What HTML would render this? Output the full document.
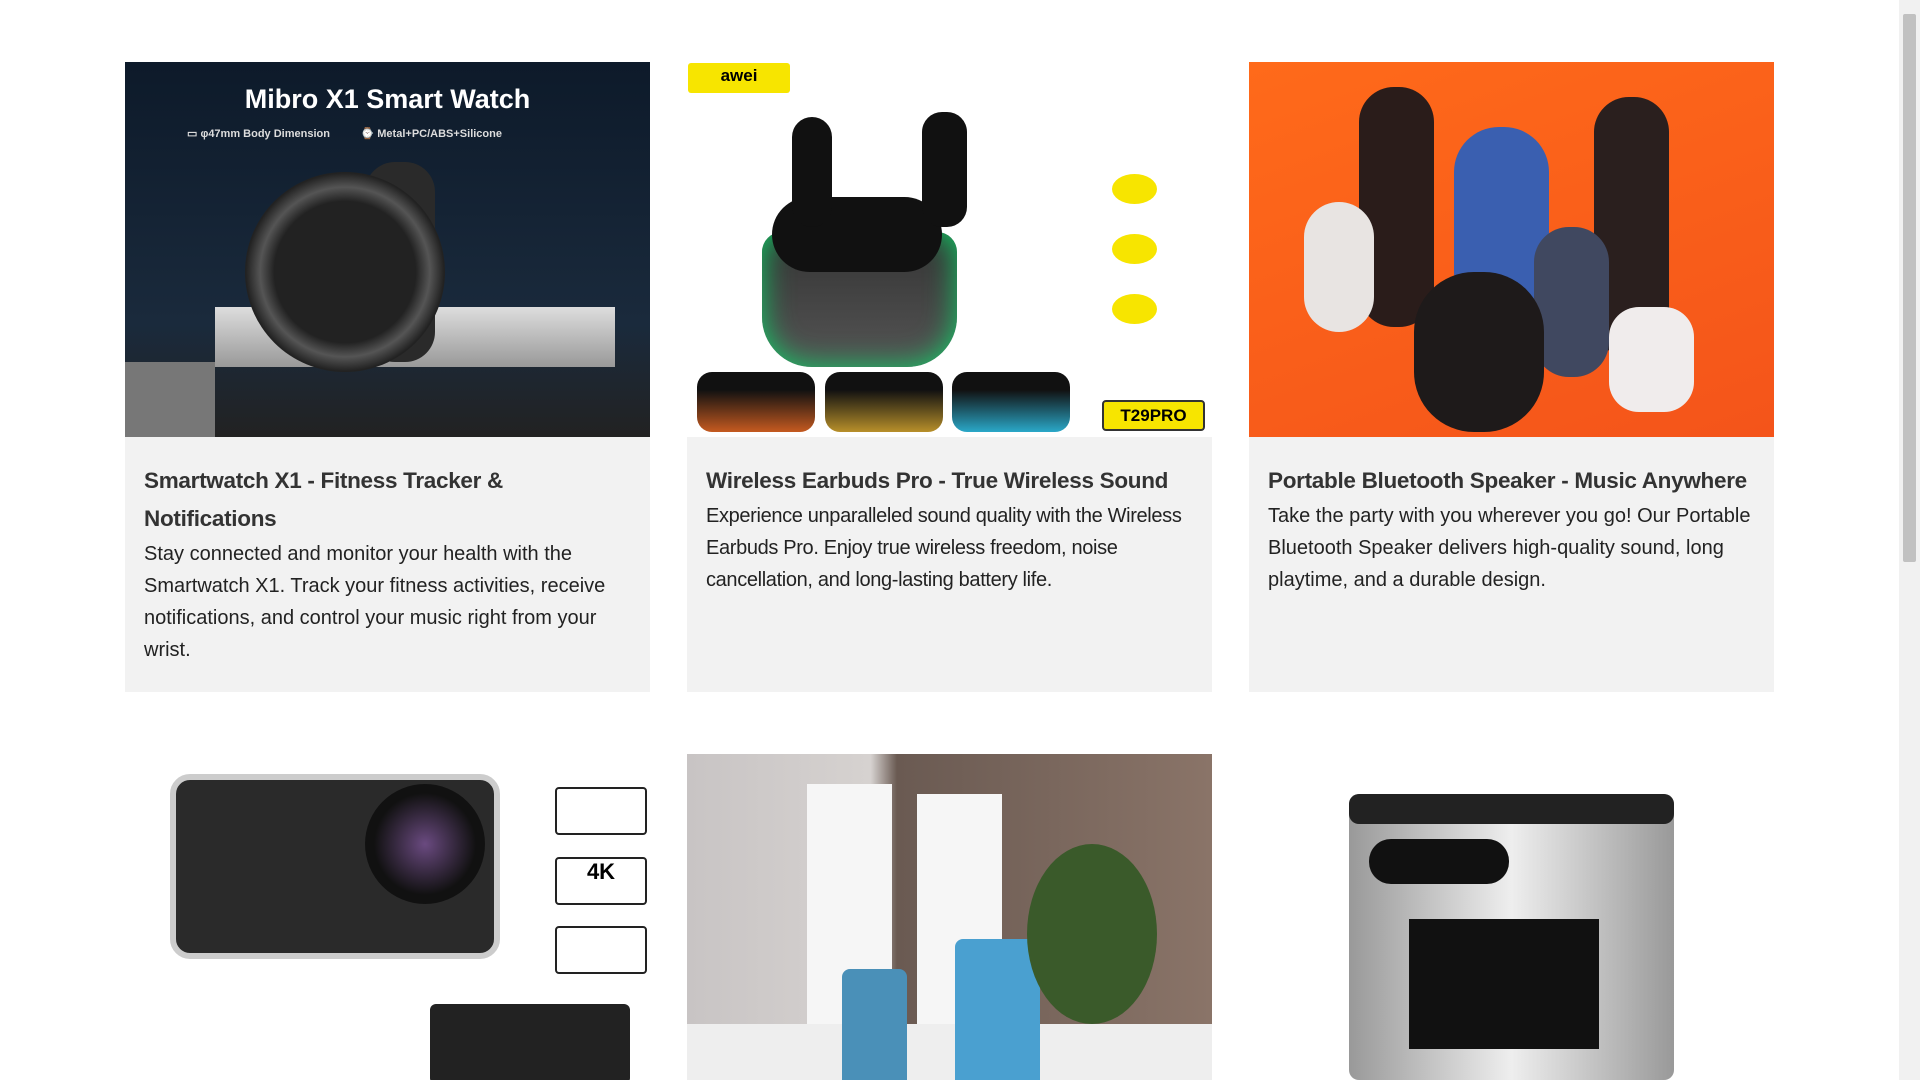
<!DOCTYPE html>
<html><head><meta charset="utf-8"><style>
*{margin:0;padding:0;box-sizing:border-box}
body{width:1920px;height:1080px;overflow:hidden;background:#fff;font-family:"Liberation Sans",sans-serif;position:relative}
.card{position:absolute;width:525px;background:#f2f2f2;top:62px;height:630px}
.img{height:375px;position:relative;overflow:hidden}
.body{padding:25px 19px}
h3{font-size:22.5px;line-height:38px;color:#333;font-weight:bold;letter-spacing:-0.3px}
p{font-size:20px;line-height:32px;color:#222;letter-spacing:0}
.r2{position:absolute;top:754px;width:525px;height:326px;overflow:hidden}
.sb{position:absolute;right:0;top:0;width:21px;height:1080px;background:#f1f1f1}
.th{position:absolute;left:4px;top:14px;width:13px;height:548px;background:#c1c1c1;border-radius:2px}
</style></head><body>

<div class="card" style="left:125px">
 <div class="img" style="background:linear-gradient(180deg,#0d1a2a,#1a2a3c 70%,#222)">
  <div style="position:absolute;top:22px;width:100%;text-align:center;color:#fff;font-size:27px;font-weight:bold">Mibro X1 Smart Watch</div>
  <div style="position:absolute;top:65px;left:62px;color:#ddd;font-size:11px;font-weight:bold">▭ φ47mm Body Dimension &nbsp;&nbsp;&nbsp;&nbsp;&nbsp;&nbsp;&nbsp;&nbsp; ⌚ Metal+PC/ABS+Silicone</div>
  <div style="position:absolute;left:90px;top:245px;width:400px;height:60px;background:linear-gradient(#ddd,#999)"></div>
  <div style="position:absolute;left:0;top:300px;width:90px;height:75px;background:#777"></div>
  <div style="position:absolute;left:240px;top:100px;width:70px;height:200px;border-radius:30px;background:#2a2a2a"></div>
  <div style="position:absolute;left:120px;top:110px;width:200px;height:200px;border-radius:50%;background:radial-gradient(#222 50%,#555 60%,#222 70%);"></div>
 </div>
 <div class="body"><h3>Smartwatch X1 - Fitness Tracker &amp; Notifications</h3><p>Stay connected and monitor your health with the Smartwatch X1. Track your fitness activities, receive notifications, and control your music right from your wrist.</p></div>
</div>

<div class="card" style="left:687px">
 <div class="img" style="background:#fff">
  <div style="position:absolute;left:1px;top:1px;width:102px;height:30px;background:#f7e500;border-radius:3px;font-weight:bold;font-size:17px;text-align:center;line-height:26px">awei</div>
  <div style="position:absolute;left:75px;top:170px;width:195px;height:135px;border-radius:20px 20px 50px 50px;background:linear-gradient(#333,#555);box-shadow:inset 0 0 30px #1c6"></div>
  <div style="position:absolute;left:85px;top:135px;width:170px;height:75px;border-radius:40px;background:#111"></div>
  <div style="position:absolute;left:105px;top:55px;width:40px;height:110px;border-radius:20px;background:#111"></div>
  <div style="position:absolute;left:235px;top:50px;width:45px;height:115px;border-radius:20px;background:#111"></div>
  <div style="position:absolute;left:10px;top:310px;width:118px;height:60px;border-radius:15px;background:linear-gradient(#111 30%,#c55a20)"></div>
  <div style="position:absolute;left:138px;top:310px;width:118px;height:60px;border-radius:15px;background:linear-gradient(#111 30%,#b8902a)"></div>
  <div style="position:absolute;left:265px;top:310px;width:118px;height:60px;border-radius:15px;background:linear-gradient(#111 30%,#2aa8c8)"></div>
  <div style="position:absolute;left:415px;top:338px;width:103px;height:31px;background:#f7e500;border:2px solid #333;border-radius:4px;font-weight:bold;font-size:17px;text-align:center;line-height:27px">T29PRO</div>
  <div style="position:absolute;left:425px;top:112px;width:45px;height:30px;background:#f7e500;border-radius:50%"></div>
  <div style="position:absolute;left:425px;top:172px;width:45px;height:30px;background:#f7e500;border-radius:50%"></div>
  <div style="position:absolute;left:425px;top:232px;width:45px;height:30px;background:#f7e500;border-radius:50%"></div>
 </div>
 <div class="body"><h3>Wireless Earbuds Pro - True Wireless Sound</h3><p style="letter-spacing:-0.35px">Experience unparalleled sound quality with the Wireless Earbuds Pro. Enjoy true wireless freedom, noise cancellation, and long-lasting battery life.</p></div>
</div>

<div class="card" style="left:1249px">
 <div class="img" style="background:linear-gradient(160deg,#ff6a1a,#f4541a)">
  <div style="position:absolute;left:110px;top:25px;width:75px;height:240px;border-radius:35px;background:#2a1c1a"></div>
  <div style="position:absolute;left:345px;top:35px;width:75px;height:260px;border-radius:35px;background:#2a1f1e"></div>
  <div style="position:absolute;left:205px;top:65px;width:95px;height:190px;border-radius:45px;background:#3a5fb0"></div>
  <div style="position:absolute;left:55px;top:140px;width:70px;height:130px;border-radius:35px;background:#e8e4e2"></div>
  <div style="position:absolute;left:285px;top:165px;width:75px;height:150px;border-radius:35px;background:#404860"></div>
  <div style="position:absolute;left:165px;top:210px;width:130px;height:160px;border-radius:60px;background:#1e1a1a"></div>
  <div style="position:absolute;left:360px;top:245px;width:85px;height:105px;border-radius:30px;background:#f0ecec"></div>
 </div>
 <div class="body"><h3>Portable Bluetooth Speaker - Music Anywhere</h3><p>Take the party with you wherever you go! Our Portable Bluetooth Speaker delivers high-quality sound, long playtime, and a durable design.</p></div>
</div>

<div class="r2" style="left:125px;background:#fff">
 <div style="position:absolute;left:45px;top:20px;width:330px;height:185px;border-radius:20px;background:#2a2a2a;border:6px solid #ccc"></div>
 <div style="position:absolute;left:240px;top:30px;width:120px;height:120px;border-radius:50%;background:radial-gradient(#6a4a80,#111 60%)"></div>
 <div style="position:absolute;left:305px;top:250px;width:200px;height:80px;background:#222;border-radius:6px"></div>
 <div style="position:absolute;left:430px;top:33px;width:92px;height:48px;border:2px solid #222;border-radius:4px"></div>
 <div style="position:absolute;left:430px;top:103px;width:92px;height:48px;border:2px solid #222;border-radius:4px;font-weight:bold;text-align:center;font-size:22px">4K</div>
 <div style="position:absolute;left:430px;top:172px;width:92px;height:48px;border:2px solid #222;border-radius:4px"></div>
</div>
<div class="r2" style="left:687px;background:linear-gradient(90deg,#c8c4c4 0%,#d6d2d0 35%,#6a5a52 40%,#8a7468 100%)">
 <div style="position:absolute;left:120px;top:30px;width:85px;height:300px;background:#f6f6f6"></div>
 <div style="position:absolute;left:230px;top:40px;width:85px;height:300px;background:#f6f6f6"></div>
 <div style="position:absolute;left:0;top:270px;width:525px;height:60px;background:#eee"></div>
 <div style="position:absolute;left:155px;top:215px;width:65px;height:130px;border-radius:8px;background:#4a90b8"></div>
 <div style="position:absolute;left:268px;top:185px;width:85px;height:150px;border-radius:8px;background:#4aa0d0"></div>
 <div style="position:absolute;left:340px;top:90px;width:130px;height:180px;border-radius:50%;background:#3a5a2a"></div>
</div>
<div class="r2" style="left:1249px;background:#fff">
 <div style="position:absolute;left:100px;top:40px;width:325px;height:286px;border-radius:10px;background:linear-gradient(90deg,#999,#eee,#999)"></div>
 <div style="position:absolute;left:100px;top:40px;width:325px;height:30px;border-radius:10px;background:#222"></div>
 <div style="position:absolute;left:120px;top:85px;width:140px;height:45px;border-radius:22px;background:#111"></div>
 <div style="position:absolute;left:160px;top:165px;width:190px;height:130px;background:#111"></div>
</div>

<div class="sb"><div class="th"></div></div>
</body></html>
